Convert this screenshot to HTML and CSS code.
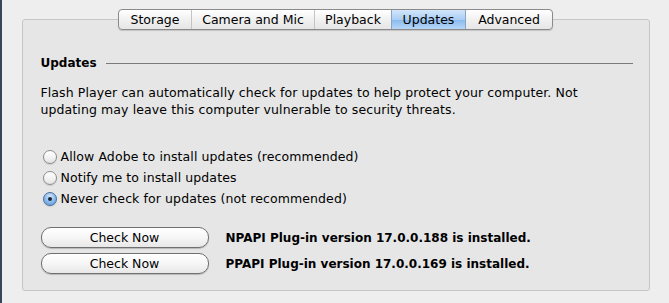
FILE: index.html
```html
<!DOCTYPE html>
<html lang="en">
<head>
    <meta charset="UTF-8">
    <title>Flash Player Settings Manager</title>
    <link rel="stylesheet" href="styles.css">
</head>
<body>
    <div class="window">
        <div class="tabs">
            <div class="tab">Storage</div>
            <div class="tab">Camera and Mic</div>
            <div class="tab">Playback</div>
            <div class="tab active">Updates</div>
            <div class="tab">Advanced</div>
        </div>

        <div class="panel">
            <div class="section-title">
                <span>Updates</span>
                <div class="rule"></div>
            </div>
            <p class="desc">Flash Player can automatically check for updates to help protect your computer. Not updating may leave this computer vulnerable to security threats.</p>

            <div class="options">
                <label class="option"><span class="radio"></span>Allow Adobe to install updates (recommended)</label>
                <label class="option"><span class="radio"></span>Notify me to install updates</label>
                <label class="option"><span class="radio checked"></span>Never check for updates (not recommended)</label>
            </div>

            <div class="checks">
                <div class="check-row">
                    <button class="btn">Check Now</button>
                    <span class="version">NPAPI Plug-in version 17.0.0.188 is installed.</span>
                </div>
                <div class="check-row">
                    <button class="btn">Check Now</button>
                    <span class="version">PPAPI Plug-in version 17.0.0.169 is installed.</span>
                </div>
            </div>
        </div>
    </div>
</body>
</html>
```

FILE: styles.css
```css
* {
    box-sizing: border-box;
    margin: 0;
    padding: 0;
}

body {
    font-family: 'DejaVu Sans', 'Liberation Sans', sans-serif;
    font-size: 12.5px;
    letter-spacing: 0.1px;
    color: #000;
    background: #eeeeee;
    border-left: 2px solid #38455a;
    width: 669px;
    height: 303px;
    overflow: hidden;
}

.window {
    padding: 9px 19px 0 19px;
    display: flex;
    flex-direction: column;
    align-items: center;
}

.tabs {
    display: flex;
    height: 21px;
    border: 1px solid #8a8a8a;
    border-radius: 4px;
    overflow: hidden;
    background: linear-gradient(#ffffff, #f1f1f1 50%, #e6e6e6);
    box-shadow: 0 1px 1px rgba(0, 0, 0, 0.15);
    position: relative;
    z-index: 1;
}

.tab {
    font-size: 12.5px;
    letter-spacing: 0;
    line-height: 19px;
    text-align: center;
    border-left: 1px solid #c4c4c4;
}

.tab:first-child {
    border-left: none;
}

.tab:nth-child(1) { width: 72px; }
.tab:nth-child(2) { width: 123px; }
.tab:nth-child(3) { width: 77px; }
.tab:nth-child(4) { width: 74px; }
.tab:nth-child(5) { width: 87px; }

.tab.active {
    background: linear-gradient(#d3e6fb, #a9cef4 50%, #8dbcef 55%, #b6d6f7);
    border-left-color: #8aa4c2;
}

.tab.active + .tab {
    border-left-color: #8aa4c2;
}

.panel {
    width: 628px;
    margin-top: -11px;
    background: #e6e6e6;
    border: 1px solid #c6c6c6;
    border-radius: 3px;
    padding: 35px 16px 16px 18px;
}

.section-title {
    display: flex;
    align-items: center;
    gap: 9px;
    font-size: 12px;
    letter-spacing: 0;
    font-weight: bold;
    line-height: 16px;
}

.rule {
    flex: 1;
    height: 1px;
    background: #7a7a7a;
}

.desc {
    margin-top: 13px;
    line-height: 17px;
    width: 570px;
}

.options {
    margin-top: 28px;
    display: flex;
    flex-direction: column;
}

.option {
    display: flex;
    align-items: center;
    gap: 4px;
    height: 21px;
    padding-left: 2px;
}

.radio {
    width: 14px;
    height: 14px;
    border-radius: 50%;
    border: 1px solid #8c8c8c;
    background: linear-gradient(#ffffff, #f4f4f4 50%, #e2e2e2);
    box-shadow: 0 1px 1px rgba(0, 0, 0, 0.12);
    display: flex;
    align-items: center;
    justify-content: center;
}

.radio.checked {
    border-color: #4a6d9a;
    background: radial-gradient(circle at 50% 30%, #d6e8fb, #7fb3ec 60%, #5c98dc);
}

.radio.checked::after {
    content: "";
    width: 4px;
    height: 4px;
    border-radius: 50%;
    background: #1b2633;
}

.checks {
    margin-top: 18px;
    display: flex;
    flex-direction: column;
    gap: 5px;
}

.check-row {
    display: flex;
    align-items: center;
    gap: 17px;
}

.btn {
    width: 168px;
    height: 21px;
    font-family: inherit;
    font-size: 12.5px;
    color: #000;
    border: 1px solid #707070;
    border-radius: 10px;
    background: linear-gradient(#ffffff, #f6f6f6 50%, #e8e8e8);
    box-shadow: 0 1px 1px rgba(0, 0, 0, 0.2);
}

.version {
    font-size: 12px;
    letter-spacing: 0;
    font-weight: bold;
}
```
